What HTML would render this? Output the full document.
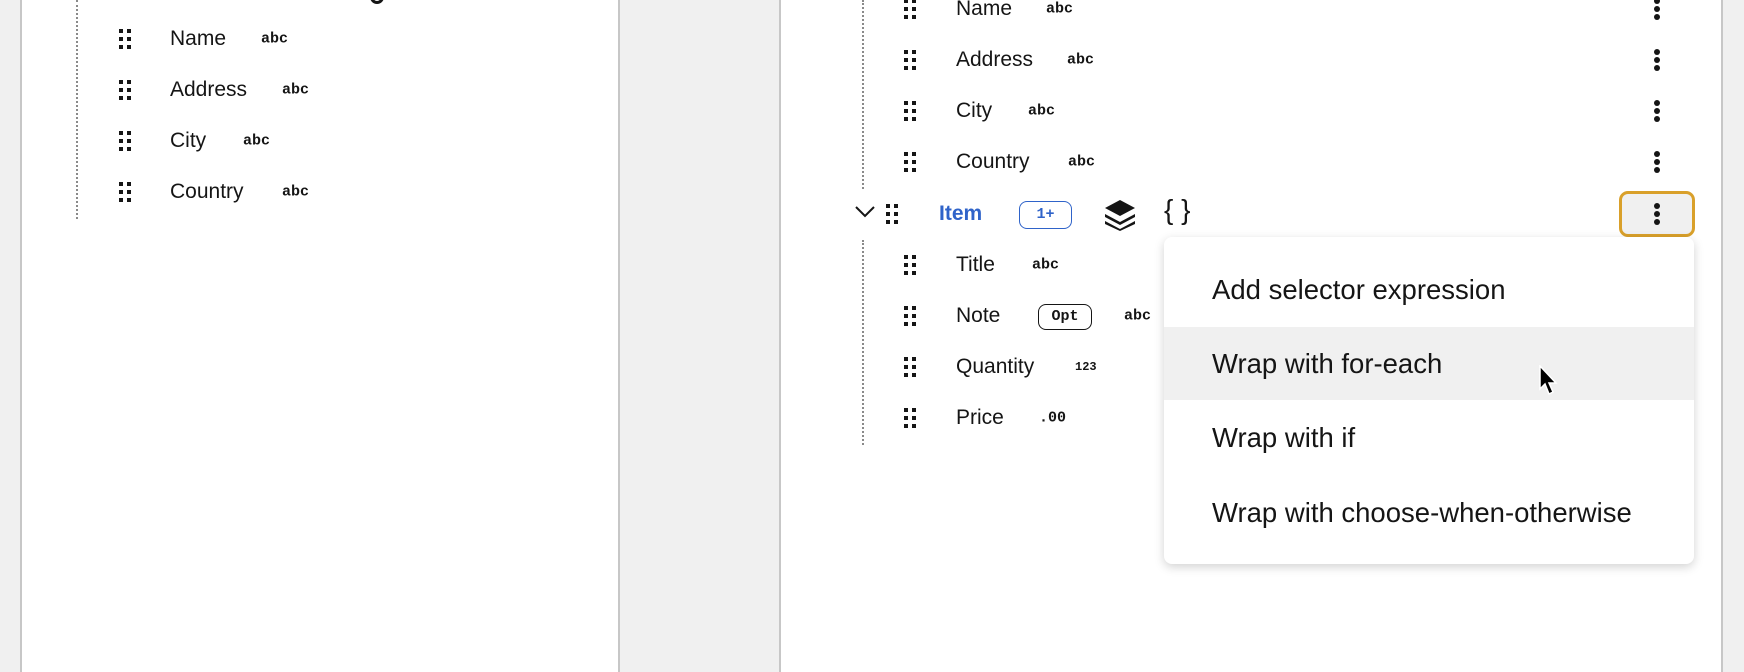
<!DOCTYPE html>
<html><head><meta charset="utf-8"><style>
*{margin:0;padding:0;box-sizing:border-box}
body{width:1744px;height:672px;background:#f0f0f0;position:relative;overflow:hidden;font-family:"Liberation Sans",sans-serif;color:#151515}
.panel{position:absolute;top:0;bottom:0;background:#fff;border-left:2px solid #c7c7c7;border-right:2px solid #c7c7c7}
.dot{position:absolute;border-left:2px dotted #8a8a8a;width:0}
.t{position:absolute;font-size:21px;line-height:24px;transform:translateY(-50%)}
.b{position:absolute;font-family:"Liberation Mono",monospace;font-weight:bold;font-size:15px;transform:translateY(-50%)}
.g{position:absolute;width:12px;height:20px;transform:translateY(-50%)}
.k{position:absolute;width:6px;height:22px;transform:translateY(-50%)}
.mi{position:absolute;left:1212px;font-size:27.5px;transform:translateY(-50%)}
</style></head><body>
<svg width="0" height="0" style="position:absolute"><defs>
<g id="grip" fill="#151515"><rect x="0" y="0" width="4" height="4"/><rect x="8" y="0" width="4" height="4"/><rect x="0" y="8" width="4" height="4"/><rect x="8" y="8" width="4" height="4"/><rect x="0" y="16" width="4" height="4"/><rect x="8" y="16" width="4" height="4"/></g>
<g id="keb" fill="#151515"><circle cx="3" cy="3" r="3"/><circle cx="3" cy="11" r="3"/><circle cx="3" cy="19" r="3"/></g>
</defs></svg>

<div class="panel" style="left:20px;width:600px"></div>
<div class="panel" style="left:779px;width:944px"></div>
<div style="position:absolute;left:370px;top:-4px;width:14px;height:8px;border:3px solid #151515;border-top:none;border-radius:0 0 8px 8px"></div>

<div class="dot" style="left:76px;top:0;height:219px"></div>
<svg class="g" style="left:119px;top:39px"><use href="#grip"/></svg><div class="t" style="left:170px;top:39px">Name</div><div class="b" style="left:261px;top:39px">abc</div>
<svg class="g" style="left:119px;top:90px"><use href="#grip"/></svg><div class="t" style="left:170px;top:90px">Address</div><div class="b" style="left:282px;top:90px">abc</div>
<svg class="g" style="left:119px;top:141px"><use href="#grip"/></svg><div class="t" style="left:170px;top:141px">City</div><div class="b" style="left:243px;top:141px">abc</div>
<svg class="g" style="left:119px;top:192px"><use href="#grip"/></svg><div class="t" style="left:170px;top:192px">Country</div><div class="b" style="left:282px;top:192px">abc</div>

<div class="dot" style="left:862px;top:0;height:189px"></div>
<div class="dot" style="left:862px;top:240px;height:205px"></div>

<svg class="g" style="left:904px;top:9px"><use href="#grip"/></svg><div class="t" style="left:956px;top:9px">Name</div><div class="b" style="left:1046px;top:9px">abc</div>
<svg class="g" style="left:904px;top:60px"><use href="#grip"/></svg><div class="t" style="left:956px;top:60px">Address</div><div class="b" style="left:1067px;top:60px">abc</div>
<svg class="g" style="left:904px;top:111px"><use href="#grip"/></svg><div class="t" style="left:956px;top:111px">City</div><div class="b" style="left:1028px;top:111px">abc</div>
<svg class="g" style="left:904px;top:162px"><use href="#grip"/></svg><div class="t" style="left:956px;top:162px">Country</div><div class="b" style="left:1068px;top:162px">abc</div>
<svg class="k" style="left:1654px;top:9px"><use href="#keb"/></svg>
<svg class="k" style="left:1654px;top:60px"><use href="#keb"/></svg>
<svg class="k" style="left:1654px;top:111px"><use href="#keb"/></svg>
<svg class="k" style="left:1654px;top:162px"><use href="#keb"/></svg>

<svg style="position:absolute;left:854px;top:205px" width="22" height="14"><path d="M2 2 L11 11 L20 2" fill="none" stroke="#151515" stroke-width="2"/></svg>
<svg class="g" style="left:886px;top:214px"><use href="#grip"/></svg>
<div class="t" style="left:939px;top:214px;color:#2f63c9;font-weight:bold">Item</div>
<div style="position:absolute;left:1019px;top:201px;width:53px;height:28px;border:1.5px solid #2f63c9;border-radius:8px;color:#2f63c9;font-family:'Liberation Mono',monospace;font-weight:bold;font-size:15px;text-align:center;line-height:25px">1+</div>
<svg style="position:absolute;left:1103px;top:199px" width="34" height="32"><path d="M17 1 L32 9 L17 17 L2 9Z" fill="#151515"/><path d="M2 15 L17 23 L32 15 L32 18 L17 26 L2 18Z" fill="#151515"/><path d="M2 22 L17 30 L32 22 L32 25 L17 32 L2 25Z" fill="#151515"/></svg>
<div style="position:absolute;left:1164px;top:194px;font-size:28px;font-family:'Liberation Sans',sans-serif">{ }</div>
<div style="position:absolute;left:1619px;top:191px;width:76px;height:46px;border:3px solid #d9a02a;border-radius:9px;background:#f0f0f0"></div>
<svg class="k" style="left:1654px;top:214px"><use href="#keb"/></svg>

<svg class="g" style="left:904px;top:265px"><use href="#grip"/></svg><div class="t" style="left:956px;top:265px">Title</div><div class="b" style="left:1032px;top:265px">abc</div>
<svg class="g" style="left:904px;top:316px"><use href="#grip"/></svg><div class="t" style="left:956px;top:316px">Note</div>
<div style="position:absolute;left:1038px;top:304px;width:54px;height:26px;border:1.5px solid #151515;border-radius:8px;font-family:'Liberation Mono',monospace;font-weight:bold;font-size:15px;text-align:center;line-height:23px">Opt</div>
<div class="b" style="left:1124px;top:316px">abc</div>
<svg class="g" style="left:904px;top:367px"><use href="#grip"/></svg><div class="t" style="left:956px;top:367px">Quantity</div><div class="b" style="left:1075px;top:367px;font-size:12px">123</div>
<svg class="g" style="left:904px;top:418px"><use href="#grip"/></svg><div class="t" style="left:956px;top:418px">Price</div><div class="b" style="left:1039px;top:418px">.00</div>

<div style="position:absolute;left:1164px;top:237px;width:530px;height:327px;background:#fff;border-radius:8px;box-shadow:0 3px 10px rgba(0,0,0,.18);overflow:hidden">
<div style="position:absolute;left:0;top:90px;width:530px;height:73px;background:#f0f0f0"></div>
</div>
<div class="mi" style="top:290px">Add selector expression</div>
<div class="mi" style="top:364px">Wrap with for-each</div>
<div class="mi" style="top:438px">Wrap with if</div>
<div class="mi" style="top:513px">Wrap with choose-when-otherwise</div>
<svg style="position:absolute;left:1538px;top:365px" width="20" height="32"><path d="M2 1 L2 24 L7 19 L11 29 L15 27 L11 18 L18 18Z" fill="#000" stroke="#fff" stroke-width="1.5"/></svg>
</body></html>
